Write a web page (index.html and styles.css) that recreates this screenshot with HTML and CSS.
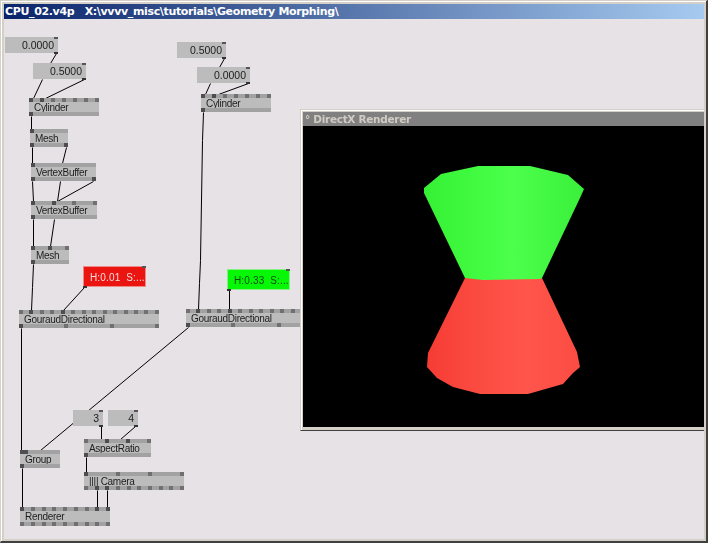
FILE: index.html
```html
<!DOCTYPE html>
<html lang="en">
<head>
<meta charset="utf-8">
<title>CPU_02.v4p</title>
<link rel="stylesheet" href="styles.css">
</head>
<body>
<div class="window">
  <div class="titlebar">CPU_02.v4p   X:\vvvv_misc\tutorials\Geometry Morphing\</div>
  <div class="canvas">
    <div class="plane">
      <svg class="wires" width="708" height="543" viewBox="0 0 708 543">
        <path transform="translate(.5 .5)" d="M56 53L50 63M42 79L33 98M84 79L45 98M31 116V129M32 147V163M66 147L62 163M32 181L33 201M60 181L57 201M93 181L57 201M33 219V246M54 219L50 246M33 264L32 287L31 310M84 287L63 310M21 328V450M188 327L40 450M224 58L219 67M210 83L205 94M248 83L218 94M203 112L202 140L200 260L199 283L198 309M229 290V309M101 426V439M135 426L120 439M86 457V472M97 490V507M107 490V507M22 468V507"/>
      </svg>

      <div class="box b-a"><span>0.0000</span></div>
      <div class="box b-b"><span>0.5000</span></div>
      <div class="box b-c"><span>0.5000</span></div>
      <div class="box b-d"><span>0.0000</span></div>
      <div class="box b-e"><span>3</span></div>
      <div class="box b-f"><span>4</span></div>
      <div class="box color red"><span>H:0.01  S:...</span></div>
      <div class="box color green"><span>H:0.33  S:...</span></div>

      <div class="node n-cyl1">
        <div class="pins"><i class="on"></i><i class="on"></i><i></i><i></i><i></i><i></i><i></i></div>
        <div class="label">Cylinder</div>
        <div class="pins"><i class="on"></i></div>
      </div>
      <div class="node n-mesh1">
        <div class="pins"><i class="on"></i></div>
        <div class="label">Mesh</div>
        <div class="pins"><i class="on"></i><i class="on"></i></div>
      </div>
      <div class="node n-vb1">
        <div class="pins"><i class="on"></i></div>
        <div class="label">VertexBuffer</div>
        <div class="pins"><i class="on"></i><i class="on"></i></div>
      </div>
      <div class="node n-vb2">
        <div class="pins"><i class="on"></i><i class="on"></i><i></i><i></i></div>
        <div class="label">VertexBuffer</div>
        <div class="pins"><i class="on"></i></div>
      </div>
      <div class="node n-mesh2">
        <div class="pins"><i class="on"></i><i class="on"></i><i></i></div>
        <div class="label">Mesh</div>
        <div class="pins"><i class="on"></i></div>
      </div>
      <div class="node n-gd1">
        <div class="pins"><i></i><i class="on"></i><i></i><i></i><i class="on"></i><i></i><i></i><i></i><i></i><i></i><i></i><i></i><i></i><i></i></div>
        <div class="label">GouraudDirectional</div>
        <div class="pins"><i class="on"></i><i></i><i></i><i></i></div>
      </div>
      <div class="node n-cyl2">
        <div class="pins"><i class="on"></i><i class="on"></i><i></i><i></i><i></i><i></i><i></i></div>
        <div class="label">Cylinder</div>
        <div class="pins"><i class="on"></i></div>
      </div>
      <div class="node n-gd2">
        <div class="pins"><i></i><i class="on"></i><i></i><i></i><i class="on"></i><i></i><i></i><i></i><i></i><i></i><i></i><i></i><i></i><i></i></div>
        <div class="label">GouraudDirectional</div>
        <div class="pins"><i class="on"></i><i></i><i></i><i></i></div>
      </div>
      <div class="node n-group">
        <div class="pins"><i class="on"></i><i class="on"></i><b></b></div>
        <div class="label">Group</div>
        <div class="pins"><i class="on"></i></div>
      </div>
      <div class="node n-aspect">
        <div class="pins"><i></i><i class="on"></i><i class="on"></i><i></i></div>
        <div class="label">AspectRatio</div>
        <div class="pins"><i class="on"></i></div>
      </div>
      <div class="node n-camera">
        <div class="pins"><i class="on"></i><i></i><i></i><i></i></div>
        <div class="label">|||| Camera</div>
        <div class="pins"><i></i><i class="on"></i><i class="on"></i><i></i><i></i><i></i><i></i><i></i><i></i><i></i></div>
      </div>
      <div class="node n-render">
        <div class="pins"><i class="on"></i><i></i><i></i><i></i><i></i><i></i><i></i><i class="on"></i><i class="on"></i></div>
        <div class="label">Renderer</div>
        <div class="pins"><i></i><i></i><i></i><i></i><i></i><i></i><i></i><i></i><i></i></div>
      </div>

      <div class="renderer">
        <div class="renderer-title">° DirectX Renderer</div>
        <svg class="view" width="401" height="301" viewBox="303 126 401 301">
          <defs>
            <linearGradient id="gr" x1="0" x2="1" y1="0" y2="0">
              <stop offset="0" stop-color="#36f036"/>
              <stop offset="0.3" stop-color="#40fa40"/>
              <stop offset="0.55" stop-color="#4cff4c"/>
              <stop offset="1" stop-color="#3af03a"/>
            </linearGradient>
            <linearGradient id="rd" x1="0" x2="1" y1="0" y2="0">
              <stop offset="0" stop-color="#f53c34"/>
              <stop offset="0.3" stop-color="#fb4a40"/>
              <stop offset="0.65" stop-color="#ff554b"/>
              <stop offset="1" stop-color="#fb4c42"/>
            </linearGradient>
          </defs>
          <polygon fill="url(#rd)" points="465,278 428,353 427,367 437,378 453,387 480,394 528,394 563,384 573,373 580,367 577,352 542,278"/>
          <polygon fill="url(#gr)" points="424,188 424,193 465,278 483,280 540,279 542,278 580,198 584,189 568,175 530,166 478,166 441,174"/>
        </svg>
      </div>
    </div>
  </div>
</div>
</body>
</html>
```
FILE: styles.css
```css
* { box-sizing: border-box; }
html, body { margin: 0; padding: 0; }
body { width: 708px; height: 543px; overflow: hidden; background: #d4d0c8; }

.window {
  width: 708px;
  height: 543px;
  display: flex;
  flex-direction: column;
  padding: 3px 2px 2px 3px;
  background: #d4d0c8;
  border-top: 1px solid #d4d0c8;
  border-left: 1px solid #d4d0c8;
  border-right: 2px solid #404040;
  border-bottom: 2px solid #404040;
  box-shadow: inset 1px 1px 0 #fff;
  font-family: "Liberation Sans", Arial, sans-serif;
}
.titlebar {
  height: 15px;
  flex: none;
  padding-left: 1px;
  background: linear-gradient(90deg, #0a246a, #a6caf0);
  color: #fff;
  font: bold 11px/15px "DejaVu Sans", sans-serif;
  letter-spacing: -0.35px;
  white-space: pre;
}
.canvas {
  flex: 1;
  position: relative;
  overflow: hidden;
  background: #e6e2e6;
}
.plane {
  position: absolute;
  left: -4px;
  top: -19px;
  width: 708px;
  height: 543px;
  will-change: transform;
}
.wires {
  position: absolute;
  left: 0;
  top: 0;
}
.wires path { fill: none; stroke: #000; stroke-width: 1; }

/* value boxes */
.box {
  position: absolute;
  height: 16px;
  background: #bcbcbc;
  color: #1c1c1c;
  font-size: 10.5px;
  line-height: 16px;
  text-align: right;
  padding-right: 4px;
  white-space: pre;
}
.box::before, .box::after {
  content: "";
  position: absolute;
  right: 0;
  width: 4px;
  height: 2px;
  background: #555;
}
.box::before { top: 0; }
.box::after { bottom: -1px; height: 2px; background: #333; }
.b-a { left: 5px; top: 37px; width: 53px; }
.b-b { left: 33px; top: 63px; width: 53px; }
.b-c { left: 177px; top: 42px; width: 49px; }
.b-d { left: 197px; top: 67px; width: 53px; }
.b-e { left: 73px; top: 410px; width: 30px; }
.b-f { left: 108px; top: 410px; width: 30px; }

.color {
  height: 21px;
  line-height: 20px;
  width: 63px;
  text-align: left;
  padding: 2px 0 0 7px;
  font-size: 10px;
  letter-spacing: 0.15px;
}
.color::after { right: auto; left: 0; bottom: -1px; }
.red {
  left: 83px;
  top: 266px;
  background: #ea1410;
  color: #f4dcdc;
  outline: 1px solid #f08a88;
  outline-offset: -1px;
}
.green {
  left: 227px;
  top: 269px;
  background: #06f806;
  color: #0e4a0e;
  outline: 1px solid #88ee88;
  outline-offset: -1px;
}

/* nodes */
.node {
  position: absolute;
  height: 18px;
  display: flex;
  flex-direction: column;
  background: #bcbcbc;
  color: #1c1c1c;
  font-size: 10px;
  letter-spacing: -0.3px;
}
.pins {
  height: 4px;
  flex: none;
  display: flex;
  justify-content: space-between;
  background: #a2a2a2;
}
.pins i { width: 4px; height: 4px; background: #707070; display: block; }
.pins i.on { background: #4e4e4e; }
.pins b { display: block; flex: 1; margin-right: -4px; }
.label {
  flex: 1;
  line-height: 12px;
  height: 10px;
  padding-left: 5px;
  white-space: pre;
}
.n-cyl1 { left: 29px; top: 98px; width: 70px; }
.n-mesh1 { left: 30px; top: 129px; width: 38px; }
.n-vb1 { left: 31px; top: 163px; width: 65px; }
.n-vb2 { left: 31px; top: 201px; width: 66px; }
.n-mesh2 { left: 31px; top: 246px; width: 38px; }
.n-gd1 { left: 19px; top: 310px; width: 140px; }
.n-cyl2 { left: 201px; top: 94px; width: 70px; }
.n-gd2 { left: 186px; top: 309px; width: 140px; }
.n-group { left: 20px; top: 450px; width: 40px; }
.n-aspect { left: 84px; top: 439px; width: 67px; }
.n-camera { left: 84px; top: 472px; width: 100px; }
.n-render { left: 20px; top: 507px; width: 90px; height: 19px; }

/* renderer window */
.renderer {
  position: absolute;
  left: 300px;
  top: 109px;
  width: 408px;
  height: 322px;
  display: flex;
  flex-direction: column;
  padding: 2px 2px 3px 2px;
  background: #d4d0c8;
  border-top: 1px solid #d4d0c8;
  border-left: 1px solid #d4d0c8;
  border-right: 2px solid #404040;
  border-bottom: 1px solid #404040;
  box-shadow: inset 1px 1px 0 #fff;
}
.renderer-title {
  height: 14px;
  flex: none;
  padding-left: 2px;
  background: #808080;
  color: #d0ccc4;
  font: bold 10.5px/14px "DejaVu Sans", sans-serif;
  letter-spacing: -0.3px;
  white-space: pre;
}
.view { display: block; background: #000; flex: none; }
```
